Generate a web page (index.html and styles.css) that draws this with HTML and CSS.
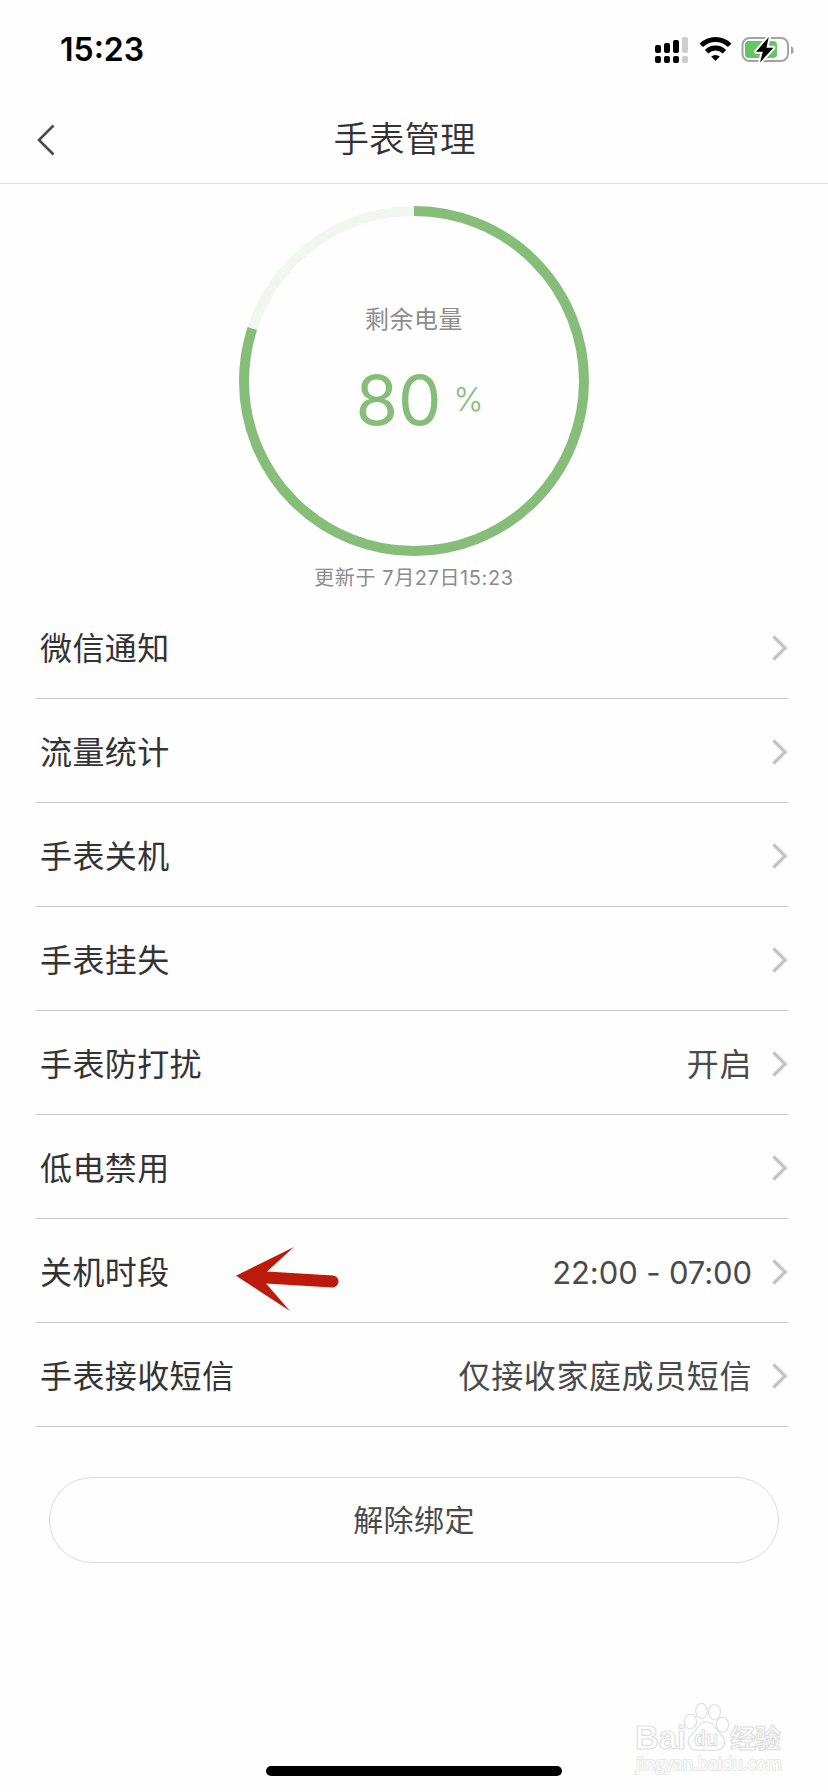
FILE: index.html
```html
<!DOCTYPE html>
<html lang="zh-CN">
<head>
<meta charset="utf-8">
<title>手表管理</title>
<link rel="stylesheet" href="styles.css">
</head>
<body>
<div class="screen">
  <header class="status">
    <span class="clock">15:23</span>
    <svg class="status-icons" width="142" height="30" viewBox="0 0 142 30">
      <g fill="#000">
        <rect x="1" y="10" width="6" height="8" rx="2"/>
        <rect x="10" y="8" width="6" height="10" rx="2"/>
        <rect x="19" y="5" width="6" height="13" rx="2"/>
        <rect x="1" y="21" width="6" height="7" rx="2"/>
        <rect x="10" y="21" width="6" height="7" rx="2"/>
        <rect x="19" y="21" width="6" height="7" rx="2"/>
      </g>
      <g fill="#cdcdcd">
        <rect x="28" y="2" width="6" height="16" rx="2"/>
        <rect x="28" y="21" width="6" height="7" rx="2"/>
      </g>
      <g fill="none" stroke="#000" stroke-width="4.800">
        <path d="M47.300 10.400a20 20 0 0 1 28.400 0"/>
        <path d="M52.600 16.700a12.600 12.600 0 0 1 17.800 0"/>
      </g>
      <path d="M61.500 26l-4.300-4.400a6.400 6.400 0 0 1 8.600 0z" fill="#000"/>
      <rect x="88.500" y="3" width="45.500" height="23" rx="7" fill="none" stroke="#a3a3a3" stroke-width="2"/>
      <path d="M137 11v8.500c3.500-1.300 3.500-7.200 0-8.500z" fill="#a3a3a3"/>
      <rect x="91" y="6" width="32" height="17" rx="4" fill="#65c466"/>
      <path d="M114.800 2L102 16.800h6.800L106 27.500 119.400 12.700h-7z" fill="#000" stroke="#fefefe" stroke-width="4" stroke-linejoin="round" paint-order="stroke"/>
    </svg>
  </header>

  <nav class="navbar">
    <svg class="back" width="20" height="32" viewBox="0 0 20 32"><path d="M17.500 1.500L3 16l14.500 14.500" fill="none" stroke="#4a4a4a" stroke-width="2.600"/></svg>
    <h1 class="title">手表管理</h1>
  </nav>

  <section class="battery">
    <div class="gauge">
      <svg class="ring" width="350" height="350" viewBox="0 0 350 350">
        <circle cx="175" cy="175" r="170" fill="none" stroke="#f1f7f0" stroke-width="10"/>
        <circle cx="175" cy="175" r="170" fill="none" stroke="#85bd79" stroke-width="10" pathLength="100" stroke-dasharray="80 100" transform="rotate(-90 175 175)"/>
      </svg>
      <div class="reading">
        <span class="caption">剩余电量</span>
        <div class="level"><span class="number">80</span><span class="percent">%</span></div>
      </div>
    </div>
    <p class="updated">更新于 7月27日15:23</p>
  </section>

  <ul class="menu">
    <li class="row"><span class="label">微信通知</span><svg class="chevron" viewBox="0 0 16 26"><path d="M2.500 2.500L13 13 2.500 23.500"/></svg></li>
    <li class="row"><span class="label">流量统计</span><svg class="chevron" viewBox="0 0 16 26"><path d="M2.500 2.500L13 13 2.500 23.500"/></svg></li>
    <li class="row"><span class="label">手表关机</span><svg class="chevron" viewBox="0 0 16 26"><path d="M2.500 2.500L13 13 2.500 23.500"/></svg></li>
    <li class="row"><span class="label">手表挂失</span><svg class="chevron" viewBox="0 0 16 26"><path d="M2.500 2.500L13 13 2.500 23.500"/></svg></li>
    <li class="row"><span class="label">手表防打扰</span><span class="value">开启</span><svg class="chevron" viewBox="0 0 16 26"><path d="M2.500 2.500L13 13 2.500 23.500"/></svg></li>
    <li class="row"><span class="label">低电禁用</span><svg class="chevron" viewBox="0 0 16 26"><path d="M2.500 2.500L13 13 2.500 23.500"/></svg></li>
    <li class="row"><span class="label">关机时段</span><span class="value time">22:00 - 07:00</span><svg class="chevron" viewBox="0 0 16 26"><path d="M2.500 2.500L13 13 2.500 23.500"/></svg>
      <svg class="arrow" width="104" height="65" viewBox="0 0 104 65"><path d="M0 28.700L58 0 31 24.500 97 28.500a6 6 0 0 1-1 12L30 36.500 54 64z" fill="#bc1a0b"/></svg>
    </li>
    <li class="row"><span class="label">手表接收短信</span><span class="value">仅接收家庭成员短信</span><svg class="chevron" viewBox="0 0 16 26"><path d="M2.500 2.500L13 13 2.500 23.500"/></svg></li>
  </ul>

  <button class="unbind">解除绑定</button>

  <div class="home-bar"></div>

  <svg class="watermark" width="160" height="80" viewBox="0 0 160 80">
    <g fill="#fefefe" stroke="#dfdfdf" stroke-width="1.200">
      <text class="wm-latin" x="0" y="46" textLength="51" lengthAdjust="spacingAndGlyphs">Bai</text>
      <ellipse cx="55.500" cy="18.500" rx="6" ry="7.500"/>
      <ellipse cx="66.500" cy="8" rx="5.700" ry="7.700"/>
      <ellipse cx="79.500" cy="9" rx="6" ry="7.500"/>
      <ellipse cx="87.500" cy="21.500" rx="6" ry="7.500"/>
      <path d="M71.500 19c-8 0-9 7-13 11-5 4-6.500 7-4.500 12 3 7 10 5 17.500 5s15 2 17.500-5c2-5 0-8-4.500-12-4-4-5-11-13-11z"/>
      <text class="wm-du" x="59" y="42.500" textLength="24" lengthAdjust="spacingAndGlyphs">du</text>
      <text class="wm-cjk" x="95" y="45" textLength="51">经验</text>
    </g>
    <text class="wm-url" x="1" y="67" textLength="146" lengthAdjust="spacingAndGlyphs" fill="#fefefe" stroke="#e6e6e6" stroke-width="2" paint-order="stroke">jingyan.baidu.com</text>
  </svg>
</div>
</body>
</html>
```
FILE: styles.css
```css
* { box-sizing: border-box; margin: 0; padding: 0; }

body {
  background: #fefefe;
  color: #333;
  font-family: Inter, "Noto Sans CJK SC", sans-serif;
}

.screen {
  position: relative;
  display: flex;
  flex-direction: column;
  width: 828px;
  height: 1792px;
  overflow: hidden;
}

.status {
  display: flex;
  justify-content: space-between;
  align-items: center;
  height: 96px;
  padding: 4px 32px 0 60px;
}

.clock { color: #000; font-size: 32px; font-weight: 600; line-height: 40px; }

.navbar {
  position: relative;
  display: flex;
  align-items: center;
  justify-content: center;
  height: 88px;
  padding-right: 19px;
  border-bottom: 1px solid #e2e2e2;
}

.back { position: absolute; left: 36px; top: 28px; }

.title { font-size: 35.5px; font-weight: 350; line-height: 48px; }

.battery { display: flex; flex-direction: column; align-items: center; padding-top: 22px; }

.gauge { display: grid; width: 350px; height: 350px; }
.ring, .reading { grid-area: 1 / 1; }

.reading { display: flex; flex-direction: column; align-items: center; padding-top: 98px; }

.caption { color: #8c8c8c; font-size: 24px; letter-spacing: 0.5px; line-height: 32px; }

.level {
  display: flex;
  align-items: center;
  gap: 12px;
  margin-top: 24px;
  padding-left: 11px;
  color: #85bd79;
  line-height: 80px;
}

.number { font-size: 69px; }
.percent { font-size: 32px; font-weight: 300; }

.updated { margin-top: 8px; color: #8c8c8c; font-size: 20px; letter-spacing: 0.6px; line-height: 28px; }

.menu { margin: 3px 40px 0 36px; list-style: none; }

.row {
  position: relative;
  display: flex;
  align-items: center;
  height: 104px;
  padding: 3px 0 0 4px;
  border-bottom: 1px solid #c8c8c8;
  font-size: 32px;
  letter-spacing: 0.4px;
  line-height: 44px;
}

.label { flex: 1; padding-top: 2px; }
.value { margin-right: 20px; padding-top: 2px; color: #4a4a4a; letter-spacing: 0.6px; }
.time { font-size: 31px; letter-spacing: -0.1px; }

.chevron {
  width: 16px;
  height: 26px;
  fill: none;
  stroke: #c6c6c6;
  stroke-width: 3.6;
  stroke-linecap: round;
}

.arrow { position: absolute; left: 200px; top: 28px; }

.unbind {
  height: 86px;
  margin: 50px 49px 0;
  padding-bottom: 4px;
  border: 1px solid #dcdcdc;
  border-radius: 43px;
  background: transparent;
  color: #4a4a4a;
  font-family: inherit;
  font-size: 30px;
  letter-spacing: 0.4px;
}

.home-bar {
  width: 296px;
  height: 10px;
  margin: auto auto 16px;
  border-radius: 5px;
  background: #000;
}

.watermark { position: absolute; left: 635px; top: 1703px; overflow: visible; }
.wm-latin { font: 700 33px "Liberation Sans", sans-serif; }
.wm-du { font: 700 22px "Liberation Sans", sans-serif; }
.wm-cjk { font: 700 26px "Noto Sans CJK SC", sans-serif; }
.wm-url { font: 400 18px "Open Sans", sans-serif; }
```
